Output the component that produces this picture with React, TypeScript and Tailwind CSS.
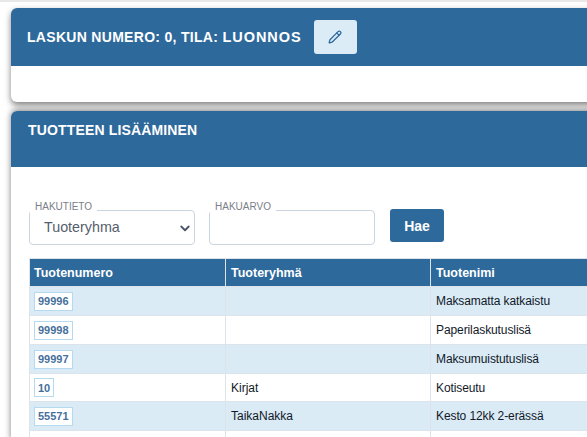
import React from "react";

const rows = [
  { n: "99996", g: "", t: "Maksamatta katkaistu", h: "h-[29px]" },
  { n: "99998", g: "", t: "Paperilaskutuslisä", h: "h-[29px]" },
  { n: "99997", g: "", t: "Maksumuistutuslisä", h: "h-[29px]" },
  { n: "10", g: "Kirjat", t: "Kotiseutu", h: "h-[28px]" },
  { n: "55571", g: "TaikaNakka", t: "Kesto 12kk 2-erässä", h: "h-[29px]" },
  { n: "", g: "", t: "", h: "h-[29px]" },
];

export default function App() {
  return (
    <div className="w-[587px] h-[437px] overflow-hidden bg-white font-['Liberation_Sans',Arial,sans-serif]">
      <div className="h-[2px] bg-[#e8e8e8]" />
      <div className="w-[800px] pl-[11px] pt-[6px]">
        <div className="rounded-[6px] bg-white shadow-[0_3px_6px_rgba(0,0,0,0.5)] h-[94px] overflow-hidden">
          <div className="h-[58px] bg-[#2e699c] flex items-center pl-[16px]">
            <span className="text-white font-bold text-[14px] tracking-[0.3px] leading-none">
              LASKUN NUMERO: 0, TILA:{" "}
              <span className="text-[14.5px] tracking-[0.95px]">LUONNOS</span>
            </span>
            <button className="ml-[12px] w-[43px] h-[34px] rounded-[3px] bg-[#dcecf7] flex items-center justify-center">
              <svg width="14" height="14" viewBox="0 0 24 24" fill="none" stroke="#2e699c" strokeWidth="2.2" strokeLinecap="round" strokeLinejoin="round">
                <path d="M21.174 6.812a1 1 0 0 0-3.986-3.987L3.842 16.174a2 2 0 0 0-.5.83l-1.321 4.352a.5.5 0 0 0 .623.622l4.353-1.32a2 2 0 0 0 .83-.497z" />
                <path d="m15 5 4 4" />
              </svg>
            </button>
          </div>
        </div>

        <div className="mt-[9px] rounded-t-[6px] bg-white shadow-[0_-1px_6px_rgba(0,0,0,0.5)] h-[330px] overflow-hidden">
          <div className="h-[56px] bg-[#2e699c] pl-[17px] pt-[12px]">
            <span className="block text-white font-bold text-[14px] tracking-[0.15px] leading-[15px]">
              TUOTTEEN LISÄÄMINEN
            </span>
          </div>

          <div className="pl-[18px]">
            <div className="flex items-start pt-[33px]">
              <div className="relative w-[166px] h-[35px] mt-[10px] border border-[#cbd5e0] rounded-[4px] flex items-center pl-[14px]">
                <span className="absolute -top-[10px] left-0 bg-white px-[5px] text-[10px] leading-[12px] text-[#7b8088]">
                  HAKUTIETO
                </span>
                <span className="text-[14.3px] text-[#555e6c]">Tuoteryhma</span>
                <svg className="absolute right-[3px] top-[11px]" width="12" height="12" viewBox="0 0 16 16" fill="none" stroke="#4a5568" strokeWidth="2.4" strokeLinecap="round" strokeLinejoin="round">
                  <path d="M3 6l5 5 5-5" />
                </svg>
              </div>
              <div className="relative ml-[14px] w-[166px] h-[35px] mt-[10px] border border-[#cbd5e0] rounded-[4px]">
                <span className="absolute -top-[10px] left-0 bg-white px-[5px] text-[10px] leading-[12px] text-[#7b8088]">
                  HAKUARVO
                </span>
              </div>
              <button className="ml-[15px] mt-[9px] w-[54px] h-[33px] rounded-[3px] bg-[#2e699c] text-white font-bold text-[14px] leading-none">
                Hae
              </button>
            </div>

            <table className="mt-[13px] border-collapse table-fixed w-[700px] text-[12px] leading-[14px] text-[#111827]">
              <colgroup>
                <col className="w-[196px]" />
                <col className="w-[205px]" />
                <col />
              </colgroup>
              <thead>
                <tr className="h-[28px] bg-[#2e699c] text-white text-[12.5px]">
                  <th className="border border-[#dde3ea] pl-[4px] text-left font-bold">Tuotenumero</th>
                  <th className="border border-[#dde3ea] pl-[5px] text-left font-bold">Tuoteryhmä</th>
                  <th className="border border-[#dde3ea] pl-[5px] text-left font-bold">Tuotenimi</th>
                </tr>
              </thead>
              <tbody>
                {rows.map((r, i) => (
                  <tr key={i} className={`${r.h} ${i % 2 === 0 ? "bg-[#daebf6]" : "bg-white"}`}>
                    <td className="border border-[#dde3ea] pl-[4px] py-0">
                      {r.n && (
                        <span className="inline-flex h-[19px] items-center bg-white border border-[#b5daef] px-[3px] text-[11px] font-bold text-[#46709c] align-middle">
                          {r.n}
                        </span>
                      )}
                    </td>
                    <td className="border border-[#dde3ea] pl-[5px] py-0">{r.g}</td>
                    <td className="border border-[#dde3ea] pl-[5px] py-0 tracking-[-0.1px]">{r.t}</td>
                  </tr>
                ))}
              </tbody>
            </table>
          </div>
        </div>
      </div>
    </div>
  );
}
